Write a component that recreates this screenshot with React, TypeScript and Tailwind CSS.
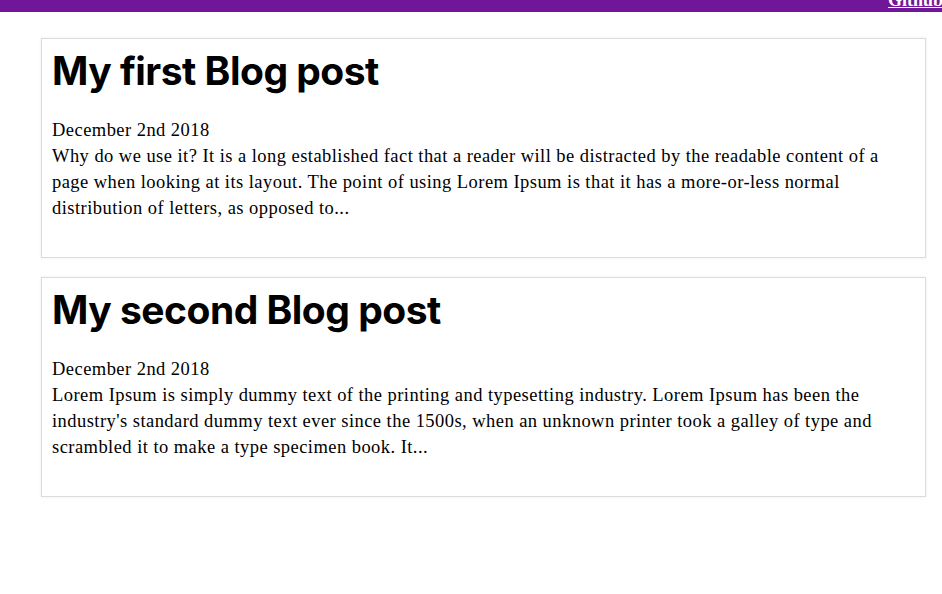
import React from 'react';

interface Post {
  title: string;
  date: string;
  lines: string[];
}

const posts: Post[] = [
  {
    title: 'My first Blog post',
    date: 'December 2nd 2018',
    lines: [
      'Why do we use it? It is a long established fact that a reader will be distracted by the readable content of a',
      'page when looking at its layout. The point of using Lorem Ipsum is that it has a more-or-less normal',
      'distribution of letters, as opposed to...',
    ],
  },
  {
    title: 'My second Blog post',
    date: 'December 2nd 2018',
    lines: [
      'Lorem Ipsum is simply dummy text of the printing and typesetting industry. Lorem Ipsum has been the',
      "industry's standard dummy text ever since the 1500s, when an unknown printer took a galley of type and",
      'scrambled it to make a type specimen book. It...',
    ],
  },
];

const serif = { fontFamily: '"Liberation Serif", "DejaVu Serif", serif' };

const PostCard: React.FC<{ post: Post }> = ({ post }) => (
  <article className="h-[220px] border border-[#dcdcdc] bg-white px-[10px] pt-[8px] shadow-[0_0_3px_rgba(0,0,0,0.08)]">
    <h1 className="font-['Inter',sans-serif] text-[39px] font-bold leading-[48px] tracking-[-0.5px] text-black">
      {post.title}
    </h1>
    <div className="mt-[22px] text-[18.5px] leading-[26px] tracking-[0.45px] text-black" style={serif}>
      <div>{post.date}</div>
      {post.lines.map((line) => (
        <div key={line} className="whitespace-nowrap">
          {line}
        </div>
      ))}
    </div>
  </article>
);

export default function App() {
  return (
    <div className="min-h-[594px] bg-white">
      {/* top bar */}
      <header className="relative h-[12px] overflow-hidden bg-[#721699]">
        <a
          href="#"
          className="absolute left-[888px] top-[-13px] whitespace-nowrap text-[18px] font-bold text-white underline"
          style={serif}
        >
          Github
        </a>
      </header>

      <main className="ml-[41px] mr-[16px] mt-[26px] flex flex-col gap-[19px]">
        {posts.map((post) => (
          <PostCard key={post.title} post={post} />
        ))}
      </main>
    </div>
  );
}
